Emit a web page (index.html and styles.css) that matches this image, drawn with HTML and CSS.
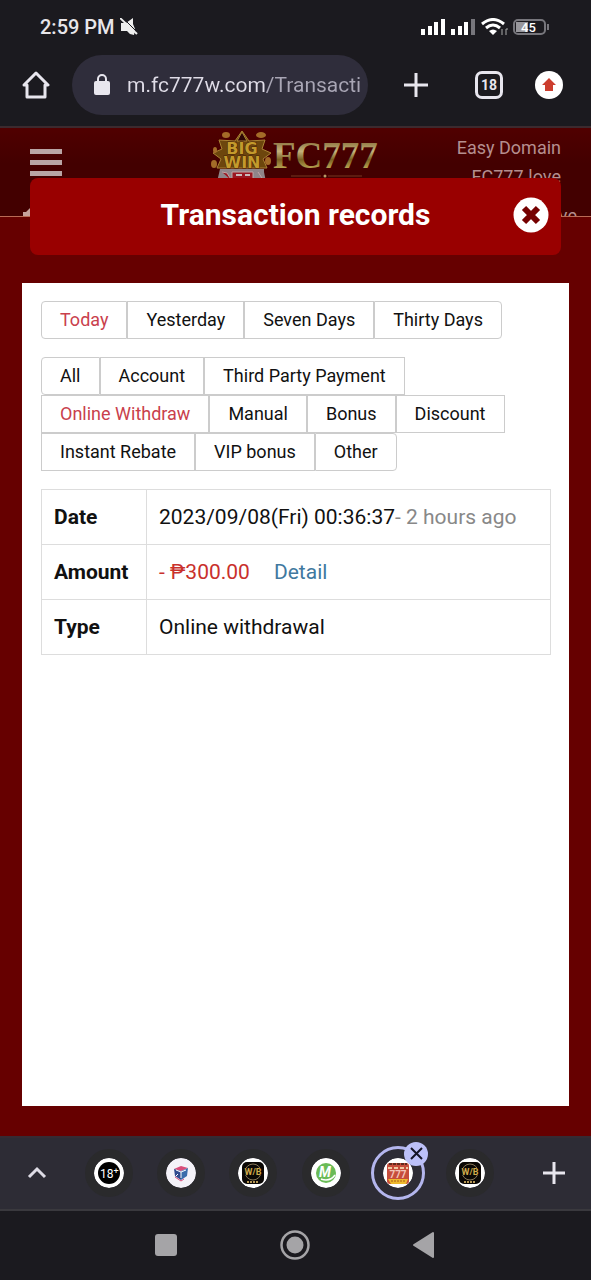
FILE: index.html
```html
<!DOCTYPE html>
<html lang="en">

<head>
  <meta charset="UTF-8">
  <meta name="viewport" content="width=device-width, initial-scale=1.0">
  <title>Transaction records</title>
  <link rel="stylesheet" href="styles.css">
</head>

<body>
  <!-- phone status bar -->
  <div class="status">
    <span class="time">2:59 PM</span>
    <svg width="18" height="18" viewBox="0 0 18 18">
      <path d="M1 5h5l7-5v6l2 5-1 6-4-1-3-3H1z" fill="#eee" />
      <path d="M2 -1l16 16" stroke="#1b1a1f" stroke-width="1" />
      <path d="M0 0l17 16" stroke="#eee" stroke-width="2" />
    </svg>
    <div class="status-right">
      <svg width="25" height="18" viewBox="0 0 25 18" fill="#fff">
        <path d="M0 11h4v6H0zM7 8h4v9H7zM13 4h4v13h-4zM20 1h4v16h-4z" />
      </svg>
      <svg width="25" height="18" viewBox="0 0 25 18" fill="#fff">
        <path d="M0 11h4v6H0zM7 8h4v9H7zM13 4h4v13h-4z" />
        <path d="M20 1h4v16h-4z" fill="#77767c" />
      </svg>
      <svg width="27" height="18" viewBox="0 0 27 18">
        <g fill="none" stroke="#fff" stroke-width="3">
          <path d="M1 6Q12-3 23 6" />
          <path d="M5 10Q12 4 19 10" />
        </g>
        <path d="M8 13Q12 10 16 13L12 17Z" fill="#fff" />
        <path d="M21 11v6M25 17v-6h2" stroke="#aaa" fill="none" />
      </svg>
      <svg width="36" height="18" viewBox="0 0 36 18">
        <rect x="1" y="2" width="31" height="14" rx="4" fill="#1b1a1f" stroke="#77767c" stroke-width="2" />
        <path d="M3 4h12v10H3z" fill="#98979c" />
        <path d="M35 6v6" stroke="#77767c" stroke-width="2" />
        <text x="8" y="14" class="battery">45</text>
      </svg>
    </div>
  </div>

  <!-- browser toolbar -->
  <div class="toolbar">
    <button class="icon-btn" aria-label="Home">
      <svg width="28" height="30" viewBox="0 0 28 30" fill="none" stroke="#e8e6ee" stroke-width="3" stroke-linejoin="round">
        <path d="M2 15L14 3l12 12h-3v12H5V15z" />
      </svg>
    </button>
    <div class="address">
      <svg width="18" height="24" viewBox="0 0 18 24">
        <rect x="1" y="8" width="16" height="14" rx="2" fill="#e8e6ee" />
        <path d="M5 9V6a4 4 0 0 1 8 0v3" fill="none" stroke="#e8e6ee" stroke-width="2" />
      </svg>
      <input type="text" class="url" value="m.fc777w.com/Transacti" aria-label="Address">
    </div>
    <button class="icon-btn" aria-label="New tab">
      <svg width="26" height="26" viewBox="0 0 26 26" stroke="#e8e6ee" stroke-width="3">
        <path d="M13 1v24M1 13h24" />
      </svg>
    </button>
    <button class="tab-count" aria-label="18 open tabs">18</button>
    <button class="update" aria-label="Update">
      <svg width="16" height="16" viewBox="0 0 16 16" fill="#cc3d2e">
        <path d="M8 1l7 7h-3v6H4V8H1z" />
      </svg>
    </button>
  </div>

  <main class="site">
    <header class="site-header">
      <div class="header-row">
        <button class="menu" aria-label="Menu">
          <span></span><span></span><span></span>
        </button>
        <svg class="logo" width="168" height="52" viewBox="0 0 168 52">
          <defs>
            <linearGradient id="gold" x1="0" y1="0" x2="0" y2="1">
              <stop offset="0.1" stop-color="#7f6530" />
              <stop offset="0.4" stop-color="#c4b27c" />
              <stop offset="0.6" stop-color="#7a6023" />
              <stop offset="0.8" stop-color="#b5a04f" />
            </linearGradient>
          </defs>
          <path d="M31 1l7 10 16-1-3 9 9 4-8 6 4 9H6l4-9-8-6 9-4-3-9 16 1z" fill="#6d460d" stroke="#a98234" />
          <path d="M31 2l-5 9h10z" fill="#2d0505" stroke="#a98234" />
          <g fill="#a46c28">
            <ellipse cx="15" cy="5" rx="4" ry="3" />
            <ellipse cx="50" cy="5" rx="5" ry="3" />
            <ellipse cx="3" cy="34" rx="3" ry="4" />
            <ellipse cx="57" cy="31" rx="3" ry="4" />
            <ellipse cx="4" cy="20" rx="2" ry="3" />
          </g>
          <text x="31" y="24" class="logo-win">BIG</text>
          <text x="31" y="38" class="logo-win">WIN</text>
          <path d="M9 39h44v3l2 10H6z" fill="#8f8589" />
          <path d="M11 42l5 1 5 8M21 42h21v10H21zM47 42l6 9" fill="#9b1721" stroke="#c0a6a6" />
          <path d="M25 45h6M34 45h5" stroke="#c9bcbc" stroke-width="2" />
          <text x="62" y="38" class="logo-name">FC777</text>
          <path d="M80 46h30M117 46h34" stroke="#773820" />
          <circle cx="114" cy="46" r="1.5" fill="#b99b67" />
        </svg>
        <div class="domains">
          <a href="#">Easy Domain</a>
          <a href="#">FC777.love</a>
        </div>
      </div>
      <div class="notice">
        <svg width="18" height="18" viewBox="0 0 18 18" fill="#c5a29c">
          <path d="M3 6h3l5-5v16l-5-5H3z" />
        </svg>
        <span>love</span>
      </div>
    </header>

    <section class="modal">
      <div class="modal-title">
        <h1>Transaction records</h1>
        <button class="close" aria-label="Close">
          <svg width="36" height="36" viewBox="0 0 36 36">
            <circle cx="18" cy="18" r="17.5" fill="#fff" />
            <path d="M11 11l14 14M25 11L11 25" stroke="#750000" stroke-width="6" />
          </svg>
        </button>
      </div>

      <div class="panel">
        <div class="filters">
          <button class="active">Today</button>
          <button>Yesterday</button>
          <button>Seven Days</button>
          <button>Thirty Days</button>
        </div>
        <div class="filters">
          <button>All</button>
          <button>Account</button>
          <button>Third Party Payment</button>
          <button class="active">Online Withdraw</button>
          <button>Manual</button>
          <button>Bonus</button>
          <button>Discount</button>
          <button>Instant Rebate</button>
          <button>VIP bonus</button>
          <button>Other</button>
        </div>
        <table class="records">
          <tr>
            <th scope="row">Date</th>
            <td>2023/09/08(Fri) 00:36:37<span class="ago">- 2 hours ago</span></td>
          </tr>
          <tr>
            <th scope="row">Amount</th>
            <td><span class="minus">- ₱300.00</span><a href="#" class="detail">Detail</a></td>
          </tr>
          <tr>
            <th scope="row">Type</th>
            <td>Online withdrawal</td>
          </tr>
        </table>
      </div>
    </section>
  </main>

  <!-- tab strip -->
  <div class="tabs">
    <button class="tab-btn" aria-label="Show tabs">
      <svg width="20" height="14" viewBox="0 0 20 14" fill="none" stroke="#dedce6" stroke-width="3">
        <path d="M2 11l8-8 8 8" />
      </svg>
    </button>
    <button class="tab-btn" aria-label="Tab 1">
      <svg class="favicon" viewBox="0 0 30 30">
        <circle cx="15" cy="15" r="15" fill="#fff" />
        <circle cx="15" cy="15" r="11" fill="#000" />
        <text x="6" y="20" class="fav-18">18<tspan class="fav-plus" dy="-4">+</tspan></text>
      </svg>
    </button>
    <button class="tab-btn" aria-label="Tab 2">
      <svg class="favicon" viewBox="0 0 30 30">
        <circle cx="15" cy="15" r="15" fill="#f4f2f8" />
        <path d="M8 11l7-3 7 2-7 3z" fill="#d84d7a" />
        <path d="M8 11l7 2v9l-6-4z" fill="#304a8e" />
        <path d="M22 10l-7 3v9l6-4z" fill="#3b6dab" />
        <path d="M10 12l5 2 5-2M15 14v6M12 16l-2 2" stroke="#fff" fill="none" />
        <path d="M9 19l6 4 3-2" stroke="#d84d7a" fill="none" />
      </svg>
    </button>
    <button class="tab-btn" aria-label="Tab 3">
      <svg class="favicon" viewBox="0 0 30 30">
        <circle cx="15" cy="15" r="15" fill="#fff" />
        <rect x="4" y="4" width="22" height="22" rx="5" fill="#0b0805" />
        <circle cx="15" cy="14" r="8" fill="none" stroke="#88795a" />
        <path d="M5 10h20v7H5z" fill="#0b0805" />
        <text x="15" y="17" class="fav-wb">W/B</text>
        <path d="M9 24h12" stroke="#b49654" stroke-width="2" stroke-dasharray="2 1" />
      </svg>
    </button>
    <button class="tab-btn" aria-label="Tab 4">
      <svg class="favicon" viewBox="0 0 30 30">
        <circle cx="15" cy="15" r="15" fill="#fff" />
        <circle cx="15" cy="15" r="10" fill="#6abb57" />
        <text x="14" y="19" class="fav-m">M</text>
        <path d="M10 21q9 3 14-4" fill="none" stroke="#fff" stroke-width="1.5" />
      </svg>
    </button>
    <button class="tab-btn current" aria-label="Current tab">
      <svg class="favicon" viewBox="0 0 30 30">
        <circle cx="15" cy="15" r="15" fill="#fff" />
        <rect x="4" y="5" width="22" height="21" rx="3" fill="#c64d3b" />
        <path d="M6 6h18" stroke="#63291d" stroke-width="2" stroke-dasharray="3 1" />
        <path d="M5 10h20" stroke="#f0c9a2" stroke-width="2" stroke-dasharray="4 2" />
        <text x="15" y="20" class="fav-777">777</text>
        <path d="M5 21h20l-2 5H8z" fill="#eeb92e" />
        <path d="M8 23h14" stroke="#a75c18" stroke-dasharray="2 1" />
      </svg>
      <svg class="tab-close" viewBox="0 0 24 24">
        <circle cx="12" cy="12" r="12" fill="#bcc0f8" />
        <path d="M7 6l11 11M18 6L7 17" stroke="#141426" stroke-width="2" />
      </svg>
    </button>
    <button class="tab-btn" aria-label="Tab 6">
      <svg class="favicon" viewBox="0 0 30 30">
        <circle cx="15" cy="15" r="15" fill="#fff" />
        <rect x="4" y="4" width="22" height="22" rx="5" fill="#0b0805" />
        <circle cx="15" cy="14" r="8" fill="none" stroke="#88795a" />
        <path d="M5 10h20v7H5z" fill="#0b0805" />
        <text x="15" y="17" class="fav-wb">W/B</text>
        <path d="M9 24h12" stroke="#b49654" stroke-width="2" stroke-dasharray="2 1" />
      </svg>
    </button>
    <button class="tab-btn add" aria-label="Add tab">
      <svg width="22" height="22" viewBox="0 0 22 22" stroke="#e8e6ee" stroke-width="3">
        <path d="M11 0v22M0 11h22" />
      </svg>
    </button>
  </div>

  <!-- android navigation -->
  <nav class="android">
    <button aria-label="Recent apps">
      <svg width="30" height="30" viewBox="0 0 30 30">
        <rect x="4" y="4" width="22" height="22" rx="3" fill="#a5a4a7" />
      </svg>
    </button>
    <button aria-label="Home screen">
      <svg width="30" height="30" viewBox="0 0 30 30">
        <circle cx="15" cy="15" r="13.5" fill="none" stroke="#a5a4a7" stroke-width="2.5" />
        <circle cx="15" cy="15" r="8.5" fill="#a5a4a7" />
      </svg>
    </button>
    <button aria-label="Back">
      <svg width="30" height="30" viewBox="0 0 30 30">
        <path d="M5 15L24 3v24z" fill="#a5a4a7" stroke="#a5a4a7" stroke-width="2" stroke-linejoin="round" />
      </svg>
    </button>
  </nav>
</body>

</html>
```
FILE: styles.css
```css
* {
  box-sizing: border-box;
}

body {
  margin: 0;
  min-height: 100vh;
  display: flex;
  flex-direction: column;
  font-family: Roboto, "Liberation Sans", sans-serif;
  background-color: #1b1a1f;
  color: #111;
}

button {
  flex: none;
  font-family: inherit;
  border: none;
  background: none;
  padding: 0;
  display: flex;
  align-items: center;
  justify-content: center;
}

a {
  text-decoration: none;
}

svg {
  display: block;
  flex: none;
}

/* status bar */
.status {
  display: flex;
  align-items: center;
  height: 54px;
  padding: 0 42px 0 40px;
  gap: 5px;
}

.time {
  font-size: 20px;
  font-weight: 500;
  color: #e8e6ea;
}

.status-right {
  margin-left: auto;
  display: flex;
  gap: 5px;
}

.battery {
  font-size: 13px;
  font-weight: 500;
  fill: #fff;
}

/* browser toolbar */
.toolbar {
  display: flex;
  align-items: center;
  height: 74px;
  padding: 0 28px 10px 22px;
  border-bottom: 2px solid #3c2a2e;
}

.address {
  flex: 1;
  min-width: 0;
  display: flex;
  align-items: center;
  gap: 16px;
  height: 60px;
  margin: 0 35px 0 22px;
  padding: 0 6px 0 21px;
  border-radius: 30px;
  background-color: #2f2d3b;
}

.url {
  flex: 1;
  min-width: 0;
  padding: 0;
  border: none;
  outline: none;
  font-family: inherit;
  font-size: 21px;
  /* host is lighter than the path */
  color: transparent;
  background: linear-gradient(90deg, #e0dde8 138px, #a9a6b5 138px);
  background-clip: text;
  -webkit-background-clip: text;
}

.tab-count {
  width: 28px;
  height: 28px;
  margin: 0 32px 0 46px;
  border: 3px solid #e8e6ee;
  border-radius: 7px;
  color: #e8e6ee;
  font-size: 14px;
  font-weight: 700;
}

.update {
  width: 28px;
  height: 28px;
  border-radius: 50%;
  background-color: #fff;
}

/* site behind the modal */
.site {
  position: relative;
  flex: 1;
  display: flex;
  flex-direction: column;
  background-color: #660000;
}

.site-header {
  height: 89px;
  overflow: hidden;
  background: linear-gradient(#500000, #430000 40%, #430000);
  border-bottom: 1px solid #b96a55;
}

.header-row {
  display: flex;
  justify-content: space-between;
  height: 78px;
  padding: 0 30px;
}

.menu {
  flex-direction: column;
  justify-content: flex-start;
  gap: 6px;
  padding-top: 21px;
}

.menu span {
  width: 32px;
  height: 5px;
  background-color: #b9a5a5;
}

.logo {
  margin: 2px 0 0 71px;
}

.logo-win {
  font-family: "DejaVu Sans", sans-serif;
  font-size: 16px;
  font-weight: 700;
  text-anchor: middle;
  fill: #c39a2c;
  stroke: #4a2206;
  stroke-width: 1px;
  paint-order: stroke;
}

.logo-name {
  font-family: "Liberation Serif", serif;
  font-size: 37px;
  font-weight: 700;
  fill: url(#gold);
}

.domains {
  display: flex;
  flex-direction: column;
  align-items: flex-end;
  padding-top: 5px;
  font-size: 18px;
  line-height: 29px;
}

.domains a {
  color: #b58f8f;
}

.notice {
  display: flex;
  justify-content: space-between;
  padding: 0 14px 0 20px;
  font-size: 18px;
  line-height: 20px;
  color: #b58f8f;
}

/* modal */
.modal {
  position: absolute;
  inset: 0;
  display: flex;
  flex-direction: column;
  gap: 28px;
  padding: 50px 22px 30px;
}

.modal-title {
  display: grid;
  grid-template-columns: 36px 1fr 36px;
  align-items: center;
  height: 77px;
  margin: 0 8px;
  padding: 0 12px 4px;
  border-radius: 8px;
  background-color: #990000;
}

.modal-title h1 {
  grid-column: 2;
  margin: 0;
  text-align: center;
  font-size: 30px;
  font-weight: 700;
  color: #fff;
}

.panel {
  flex: 1;
  padding: 18px 18px 18px 19px;
  background-color: #fff;
}

.filters {
  display: flex;
  flex-wrap: wrap;
  margin-bottom: 18px;
}

.filters button {
  height: 38px;
  padding: 0 18px 2px;
  border: 1px solid #ccc;
  font-size: 18px;
  color: #111;
}

.filters button:first-child {
  border-radius: 4px 0 0 4px;
}

.filters button:last-child {
  border-radius: 0 4px 4px 0;
}

.filters .active {
  color: #c9404c;
}

.records {
  width: 100%;
  border-collapse: collapse;
  font-size: 21px;
  line-height: 30px;
}

.records th,
.records td {
  padding: 12px;
  border: 1px solid #ddd;
  text-align: left;
}

.records th {
  width: 105px;
  font-weight: 700;
}

.ago {
  color: #888;
}

.minus {
  color: #c9302c;
}

.detail {
  margin-left: 24px;
  color: #41799f;
}

/* tab strip */
.tabs {
  display: grid;
  grid-template-columns: 73px repeat(6, 1fr) 85px;
  height: 75px;
  padding-bottom: 2px;
  background-color: #2d2c35;
  border-top: 2px solid #362b33;
  border-bottom: 2px solid #3a393e;
}

.tab-btn {
  position: relative;
}

.favicon {
  width: 30px;
  height: 30px;
  border-radius: 50%;
  box-shadow: 0 0 0 9px #2a2a2c;
}

.fav-18 {
  font-size: 12px;
  fill: #fff;
}

.fav-plus {
  font-size: 9px;
}

.fav-wb {
  font-size: 9px;
  font-weight: 700;
  text-anchor: middle;
  fill: #d2ac4c;
}

.fav-m {
  font-size: 14px;
  font-style: italic;
  font-weight: 700;
  text-anchor: middle;
  fill: #fff;
}

.fav-777 {
  font-size: 10px;
  font-weight: 700;
  text-anchor: middle;
  fill: #f3c4b8;
}

.current .favicon {
  width: 54px;
  height: 54px;
  padding: 9px;
  border: 3px solid #b4b6ee;
  box-shadow: none;
}

.tab-close {
  position: absolute;
  top: 4px;
  right: 6px;
  width: 24px;
  height: 24px;
}

.add {
  padding-left: 11px;
}

/* android navigation */
.android {
  display: flex;
  justify-content: center;
  align-items: center;
  gap: 99px;
  height: 69px;
  padding: 0 1px 2px 0;
}
```
